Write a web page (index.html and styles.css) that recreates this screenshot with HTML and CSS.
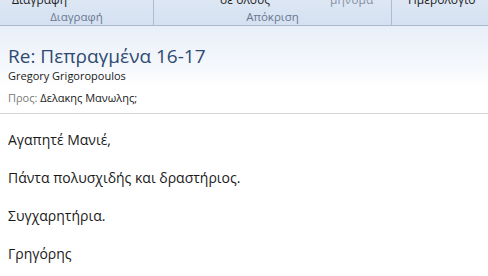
FILE: index.html
```html
<!DOCTYPE html>
<html lang="el">
<head>
  <meta charset="UTF-8">
  <title>Re: Πεπραγμένα 16-17</title>
  <link rel="stylesheet" href="styles.css">
</head>
<body>

  <div class="ribbon">
    <div class="group group-delete">
      <div class="cmds"><span class="cmd cmd-1">Διαγραφή</span></div>
      <div class="group-label">Διαγραφή</div>
    </div>
    <div class="group group-reply">
      <div class="cmds">
        <span class="cmd cmd-2">σε όλους</span>
        <span class="cmd cmd-3 dim">μήνυμα</span>
      </div>
      <div class="group-label">Απόκριση</div>
    </div>
    <div class="group group-cal">
      <div class="cmds"><span class="cmd cmd-4">Ημερολόγιο</span></div>
      <div class="group-label"></div>
    </div>
  </div>

  <div class="header">
    <div class="subject">Re: Πεπραγμένα 16-17</div>
    <div class="sender">Gregory Grigoropoulos</div>
    <div class="to"><span class="to-label">Προς:</span> Δελακης Μανωλης;</div>
  </div>

  <div class="message">
    <p>Αγαπητέ Μανιέ,</p>
    <p>Πάντα πολυσχιδής και δραστήριος.</p>
    <p>Συγχαρητήρια.</p>
    <p>Γρηγόρης</p>
  </div>

</body>
</html>
```

FILE: styles.css
```css
body{
  margin: 0;
  width: 488px;
  height: 276px;
  overflow: hidden;
  background: #ffffff;
  font-family: "Open Sans", "Noto Sans", sans-serif;
  color: #1a1a1a;
}
.ribbon{
  display: flex;
  height: 25px;
  background: linear-gradient(#dde7f4, #d5e1f1);
  border-bottom: 1px solid #a9b8cc;
  box-shadow: 0 1px 0 #eef3fa;
  overflow: hidden;
}
.group{
  display: flex;
  flex-direction: column;
  border-right: 1px solid #aebbd0;
}
.group-delete{ width: 153px; }
.group-reply{ width: 237px; }
.group-cal{ flex: 1; border-right: none; }
.cmds{
  height: 10px;
  position: relative;
  overflow: hidden;
}
.cmd{
  position: absolute;
  bottom: 3px;
  font-size: 12px;
  line-height: 14px;
  color: #1e1e1e;
  white-space: nowrap;
}
.cmd-1{ left: 12px; }
.cmd-2{ left: 66px; }
.cmd-3{ left: 176px; }
.cmd-4{ left: 16px; }
.dim{ color: #8a93a3; }
.group-label{
  text-align: center;
  font-size: 11.5px;
  line-height: 14px;
  color: #6a7891;
}
.header{
  padding: 17px 8px 8px 8px;
  background: linear-gradient(#e8eff9 0px, #f7f9fc 45px, #ffffff 60px);
  border-bottom: 1px solid #d6d6d6;
}
.subject{
  font-size: 19px;
  line-height: 26px;
  color: #2e4a72;
}
.sender{
  font-size: 11px;
  line-height: 14px;
  color: #1a1a1a;
}
.to{
  margin-top: 8px;
  font-size: 11px;
  line-height: 14px;
  color: #1a1a1a;
}
.to-label{ color: #7a7a7a; }
.message{
  padding: 18px 8px 0 8px;
}
.message p{
  margin: 0 0 22px 0;
  font-size: 14px;
  line-height: 16px;
}
```
